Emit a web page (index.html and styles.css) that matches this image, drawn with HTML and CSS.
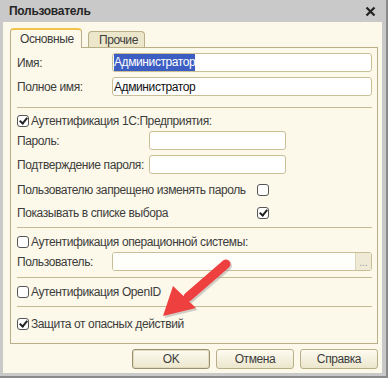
FILE: index.html
```html
<!DOCTYPE html>
<html lang="ru">
<head>
<meta charset="utf-8">
<link rel="stylesheet" href="styles.css">
</head>
<body>
<div class="window">
  <div class="titlebar">
    <span class="title">Пользователь</span>
    <svg class="close" width="11" height="11" viewBox="0 0 11 11"><path d="M1.5 1.5 L9.5 9.5 M9.5 1.5 L1.5 9.5" stroke="#222" stroke-width="2.2"/></svg>
  </div>
  <div class="content">
    <div class="tabs">
      <div class="tab active">Основные</div>
      <div class="tab">Прочие</div>
    </div>
    <div class="panel">
      <div class="row r1"><span class="label w95">Имя:</span><div class="input wide"><span class="sel">Администратор</span></div></div>
      <div class="row r2"><span class="label w95">Полное имя:</span><div class="input wide">Администратор</div></div>
      <div class="sep s1"></div>
      <div class="row r3"><span class="cb checked"></span><span class="cbtext">Аутентификация 1С:Предприятия:</span></div>
      <div class="row r4"><span class="label w132">Пароль:</span><div class="input pw"></div></div>
      <div class="row r5"><span class="label w132">Подтверждение пароля:</span><div class="input pw"></div></div>
      <div class="row r6"><span class="label w240">Пользователю запрещено изменять пароль</span><span class="cb"></span></div>
      <div class="row r7"><span class="label w240">Показывать в списке выбора</span><span class="cb checked"></span></div>
      <div class="sep s2"></div>
      <div class="row r8"><span class="cb"></span><span class="cbtext">Аутентификация операционной системы:</span></div>
      <div class="row r9"><span class="label w95">Пользователь:</span><div class="input wide disabled"><span class="fill"></span><span class="dots">...</span></div></div>
      <div class="sep s3"></div>
      <div class="row r10"><span class="cb"></span><span class="cbtext">Аутентификация OpenID</span></div>
      <div class="sep s4"></div>
      <div class="row r11"><span class="cb checked"></span><span class="cbtext">Защита от опасных действий</span></div>
    </div>
    <div class="buttons">
      <div class="btn default">OK</div>
      <div class="btn">Отмена</div>
      <div class="btn">Справка</div>
    </div>
  </div>
  <svg class="arrow" width="90" height="80" viewBox="0 0 90 80">
    <g transform="translate(1.5,2)" fill="#9a9a9a" opacity="0.45">
      <line x1="66" y1="8" x2="28" y2="41" stroke="#9a9a9a" stroke-width="9" stroke-linecap="round"/>
      <polygon points="3,60 13,30 36,52"/>
    </g>
    <line x1="66" y1="8" x2="28" y2="41" stroke="#ef4040" stroke-width="9" stroke-linecap="round"/>
    <polygon points="3,60 13,30 36,52" fill="#ef4040"/>
  </svg>
</div>
</body>
</html>
```

FILE: styles.css
```css
* { box-sizing: border-box; }
html, body { margin: 0; padding: 0; }
body {
  width: 388px; height: 378px; overflow: hidden;
  font-family: "Liberation Sans", Arial, sans-serif;
  font-size: 12px;
  letter-spacing: -0.4px;
  color: #3c3c3c;
  background: #c8c8c8;
}
.window {
  position: relative;
  width: 388px; height: 378px;
  background: #c9c9c9;
  border-right: 2px solid #8a8a8a;
  border-bottom: 2px solid #8a8a8a;
  padding: 0 4px 3px 3px;
  display: flex; flex-direction: column;
}
.titlebar {
  height: 22px;
  display: flex; align-items: center; justify-content: space-between;
  padding: 0 6px 0 6px;
}
.title { font-weight: bold; color: #262626; font-size: 12px; letter-spacing: -0.3px; }
.close { margin-top: 1px; }
.content {
  flex: 1;
  background: #fcf9ea;
  padding: 6px 4px 0 7px;
  display: flex; flex-direction: column;
}
.tabs { display: flex; align-items: flex-end; height: 19px; gap: 6px; position: relative; z-index: 1; }
.tab {
  border: 1px solid #b8ae88;
  border-bottom: none;
  border-radius: 4px 4px 0 0;
  padding: 0 9px;
  color: #3c3c3c;
  display: flex; align-items: center;
}
.tab.active {
  height: 20px;
  width: 72px;
  background: #fcf9ea;
  border-top: 2px solid #f2c24c;
  margin-bottom: -1px;
  padding-left: 9px;
}
.tab:not(.active) {
  height: 16px;
  width: 57px;
  background: #ece6cb;
  padding-left: 10px;
}
.panel {
  height: 297px;
  border: 1px solid #b8ae88;
  padding: 0 5px 0 6px;
  display: flex; flex-direction: column;
}
.row { display: flex; align-items: center; height: 19px; }
.label { flex: none; }
.w95 { width: 95px; }
.w132 { width: 132px; }
.w240 { width: 240px; }
.input {
  height: 19px;
  border: 1px solid #c9bf97;
  border-radius: 3px;
  background: #fff;
  color: #111;
  display: flex; align-items: center;
  padding-left: 1px;
}
.wide { flex: 1; }
.pw { width: 137px; }
.sel { background: #3c5dc2; color: #fff; padding: 1px 0 1px 0; line-height: 15px; }
.disabled { padding: 0; overflow: hidden; }
.disabled .fill { flex: 1; height: 100%; background: #fefefb; }
.disabled .dots {
  width: 16px; height: 100%;
  background: #eeead5;
  border-left: 1px solid #ddd6b8;
  color: #9a9a9a; font-size: 10px; letter-spacing: 0;
  display: flex; align-items: flex-end; justify-content: center; padding-bottom: 2px;
}
.sep { height: 1px; background: #c4bb95; }
.cb {
  width: 12px; height: 12px;
  border: 1px solid #555;
  border-radius: 3px;
  background: #fff;
  flex: none;
  position: relative;
}
.cb.checked::after {
  content: "";
  position: absolute;
  left: 3px; top: 0px;
  width: 3px; height: 6px;
  border-right: 2px solid #222;
  border-bottom: 2px solid #222;
  transform: rotate(40deg);
}
.cbtext { margin-left: 2px; }
.r1 { margin-top: 5px; }
.r2 { margin-top: 5px; }
.s1 { margin-top: 11px; }
.r3 { margin-top: 3px; }
.r4 { margin-top: 1px; }
.r5 { margin-top: 5px; }
.r6 { margin-top: 6px; }
.r7 { margin-top: 4px; }
.s2 { margin-top: 5px; }
.r8 { margin-top: 4px; }
.r9 { margin-top: 1px; }
.s3 { margin-top: 6px; }
.r10 { margin-top: 4px; }
.s4 { margin-top: 5px; }
.r11 { margin-top: 7px; }
.buttons {
  display: flex; justify-content: flex-end; gap: 6px;
  margin-top: 5px;
  padding-right: 0;
}
.btn {
  height: 20px;
  width: 78px;
  border: 1px solid #b8ae88;
  border-radius: 3px;
  background: linear-gradient(#fdfbf1, #ece6cc);
  display: flex; align-items: center; justify-content: center;
  color: #3c3c3c;
}
.btn.default { border-color: #9a9070; box-shadow: inset 0 0 0 1px #e2dbbd; }
.arrow { position: absolute; left: 160px; top: 256px; }
```
